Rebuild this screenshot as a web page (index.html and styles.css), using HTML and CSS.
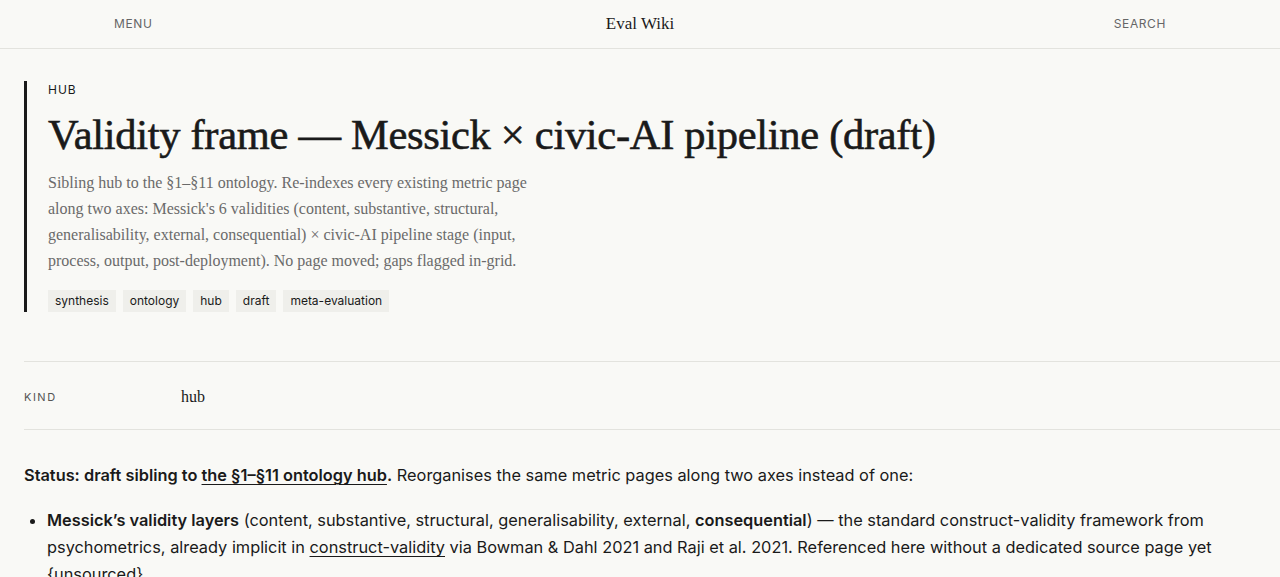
FILE: index.html
```html
<!DOCTYPE html>
<html lang="en">
<head>
<meta charset="utf-8">
<title>Eval Wiki</title>
<link rel="stylesheet" href="styles.css">
</head>
<body>
<header class="topbar">
  <div class="topbar-inner">
    <a class="nav-link nav-left" href="#">MENU</a>
    <a class="brand" href="#">Eval Wiki</a>
    <a class="nav-link nav-right" href="#">SEARCH</a>
  </div>
</header>
<main class="page">
  <section class="hero">
    <div class="kicker">HUB</div>
    <h1 class="title">Validity frame — Messick × civic-AI pipeline (draft)</h1>
    <p class="summary">Sibling hub to the §1–§11 ontology. Re-indexes every existing metric page along two axes: Messick's 6 validities (content, substantive, structural, generalisability, external, consequential) × civic-AI pipeline stage (input, process, output, post-deployment). No page moved; gaps flagged in-grid.</p>
    <ul class="tags">
      <li class="tag">synthesis</li>
      <li class="tag">ontology</li>
      <li class="tag">hub</li>
      <li class="tag">draft</li>
      <li class="tag">meta-evaluation</li>
    </ul>
  </section>
  <dl class="meta">
    <dt class="meta-key">KIND</dt>
    <dd class="meta-val">hub</dd>
  </dl>
  <article class="body">
    <p><strong>Status: draft sibling to <a href="#">the §1–§11 ontology hub</a>.</strong> Reorganises the same metric pages along two axes instead of one:</p>
    <ul class="list">
      <li><strong>Messick’s validity layers</strong> (content, substantive, structural, generalisability, external, <strong>consequential</strong>) — the standard construct-validity framework from psychometrics, already implicit in <a href="#">construct-validity</a> via Bowman &amp; Dahl 2021 and Raji et al. 2021. Referenced here without a dedicated source page yet {unsourced}.</li>
    </ul>
  </article>
</main>
</body>
</html>
```
FILE: styles.css
```css
* { box-sizing: border-box; }
html, body { margin: 0; padding: 0; }
body {
  background: #f9f9f6;
  color: #1a1a1a;
  font-family: Inter, "Noto Sans", sans-serif;
}
a { color: inherit; }

.topbar {
  height: 49px;
  border-bottom: 1px solid #e3e3de;
}
.topbar-inner {
  height: 48px;
  margin: 0 114px;
  display: grid;
  grid-template-columns: 1fr auto 1fr;
  align-items: center;
}
.nav-link {
  font-family: Inter, sans-serif;
  font-size: 12px;
  letter-spacing: 0.6px;
  color: #666;
  text-decoration: none;
  padding-bottom: 2px;
}
.nav-left { justify-self: start; }
.nav-right { justify-self: end; }
.brand {
  font-family: "Liberation Serif", serif;
  font-size: 17px;
  color: #1a1a1a;
  text-decoration: none;
}

.page {
  padding: 32px 24px 0 24px;
}
.hero {
  border-left: 3px solid #1a1a1a;
  padding: 2px 0 0 21px;
}
.kicker {
  font-size: 12px;
  letter-spacing: 1px;
  color: #1a1a1a;
  line-height: 14px;
}
.title {
  font-family: "Liberation Serif", serif;
  font-weight: 400;
  font-size: 42.5px;
  line-height: 52px;
  margin: 12px 0 9px;
  letter-spacing: -0.3px;
  color: #1a1a1a;
  -webkit-text-stroke: 0.6px #1a1a1a;
}
.summary {
  font-family: "Liberation Serif", serif;
  font-size: 16px;
  line-height: 26px;
  color: #6a6a6a;
  max-width: 508px;
  margin: 0 0 16px;
}
.tags {
  list-style: none;
  margin: 0;
  padding: 0;
  display: flex;
  gap: 7px;
}
.tag {
  font-size: 12px;
  line-height: 22px;
  padding: 0 7px;
  background: #efefeb;
  color: #1a1a1a;
}

.meta {
  margin: 49px -24px 0 0;
  border-top: 1px solid #e3e3de;
  border-bottom: 1px solid #e3e3de;
  display: grid;
  grid-template-columns: 157px 1fr;
  align-items: center;
  height: 69px;
  padding-top: 3px;
}
.meta-key {
  font-size: 11px;
  letter-spacing: 1.5px;
  color: #555;
}
.meta-val {
  margin: 0;
  font-family: "Liberation Serif", serif;
  font-size: 16px;
}

.body {
  font-size: 16.35px;
  line-height: 27px;
  color: #1a1a1a;
}
.body p { margin: 32px 0 18px; }
.body strong { font-weight: 600; }
.body a { text-decoration: underline; text-underline-offset: 3px; text-decoration-thickness: 1px; }
.list { margin: 0; padding-left: 23px; }
```
